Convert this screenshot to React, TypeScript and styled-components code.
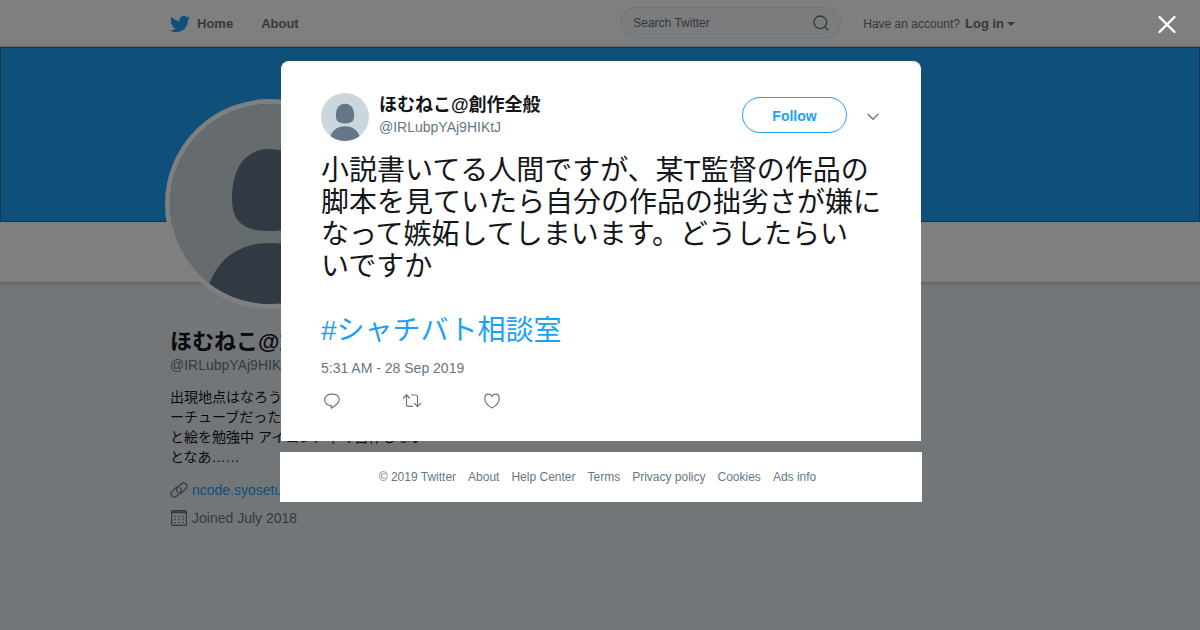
import React from "react";
import styled, { createGlobalStyle } from "styled-components";

const sans = `"Liberation Sans", "Noto Sans CJK JP", sans-serif`;

const GlobalStyle = createGlobalStyle`
  *, *::before, *::after { box-sizing: border-box; }
  html, body { margin: 0; min-height: 100%; }
  body { background: #e6ecf0; color: #14171a; font: 14px/20px ${sans}; overflow: hidden; }
  a { color: inherit; text-decoration: none; }
  h1, h2, p { margin: 0; }
  svg { display: block; flex: none; }
  button, input { font-family: inherit; }
`;

const Page = styled.div`
  min-height: 100vh;
`;

const TopBar = styled.header`
  height: 47px;
  background: #fff;
  border-bottom: 1px solid #c4c4c4;
`;

const Container = styled.div`
  max-width: 860px;
  margin: 0 auto;
`;

const TopBarInner = styled(Container)`
  display: flex;
  align-items: center;
  height: 46px;
  color: #66757f;
`;

const Nav = styled.nav`
  display: flex;
  align-items: center;
  flex: 1;
  gap: 28px;
  padding-top: 2px;
  font-size: 13px;
  font-weight: bold;
`;

const HomeLink = styled.a`
  display: flex;
  align-items: center;
  gap: 7px;
`;

const Search = styled.form`
  display: flex;
  align-items: center;
  width: 221px;
  height: 32px;
  padding: 0 11px 0 12px;
  border: 1px solid #e1e8ed;
  border-radius: 16px;
  background: #f5f8fa;
`;

const SearchInput = styled.input`
  flex: 1;
  min-width: 0;
  padding: 0;
  border: 0;
  background: none;
  font-size: 12px;
  color: #66757f;
  &::placeholder { color: #66757f; opacity: 1; }
`;

const IconButton = styled.button`
  display: grid;
  place-items: center;
  padding: 0;
  border: 0;
  background: none;
  color: inherit;
  cursor: pointer;
`;

const Account = styled.div`
  display: flex;
  align-items: center;
  gap: 5px;
  margin: 0 15px 0 22px;
  padding-top: 2px;
  font-size: 12px;
`;

const LogIn = styled.a`
  display: flex;
  align-items: center;
  gap: 3px;
  font-size: 13px;
  font-weight: bold;
`;

const Caret = styled.span`
  border: 4px solid transparent;
  border-top-color: currentColor;
  border-bottom: 0;
`;

const Banner = styled.div`
  height: 175px;
  background: #1da1f2;
  border: 1px solid #1474b0;
`;

const ProfileBar = styled.div`
  height: 60px;
  background: #fff;
  box-shadow: 0 1px 3px rgba(0, 0, 0, 0.25);
`;

const BigAvatar = styled.div`
  position: absolute;
  left: -5px;
  bottom: -27px;
  border: 5px solid #fff;
  border-radius: 50%;
`;

const AvatarAnchor = styled(Container)`
  position: relative;
  height: 100%;
`;

const Profile = styled(Container)`
  padding-top: 47px;
  color: #66757f;
`;

const ProfileName = styled.h1`
  font-size: 22px;
  line-height: 26px;
  color: #14171a;
`;

const Handle = styled.p`
  font-size: 14px;
  line-height: 20px;
  color: #657786;
`;

const Bio = styled.p`
  margin: 12px 0 9px;
  color: #14171a;
  white-space: pre-line;
`;

const Fact = styled.div`
  display: flex;
  align-items: center;
  gap: 4px;
  height: 28px;
  a { color: #1da1f2; }
`;

const Overlay = styled.div`
  position: fixed;
  inset: 0;
  display: flex;
  flex-direction: column;
  align-items: center;
  gap: 11px;
  padding: 61px 0 0 2px;
  background: rgba(0, 0, 0, 0.5);
`;

const Close = styled(IconButton)`
  position: absolute;
  top: 14px;
  right: 23px;
  width: 20px;
  height: 20px;
  color: #fff;
`;

const Card = styled.article`
  width: 640px;
  max-width: 100%;
  padding: 32px 40px 28px;
  border-radius: 8px 8px 0 0;
  background: #fff;
`;

const CardHeader = styled.header`
  display: flex;
  align-items: center;
  gap: 10px;
  height: 48px;
`;

const Author = styled.div`
  flex: 1;
  padding-bottom: 4px;
`;

const AuthorName = styled.h2`
  font-size: 18px;
  line-height: 24px;
`;

const Follow = styled.button`
  width: 105px;
  height: 36px;
  margin-bottom: 4px;
  padding: 2px 0 0;
  border: 1px solid #1da1f2;
  border-radius: 18px;
  background: #fff;
  color: #1da1f2;
  font-size: 14px;
  font-weight: bold;
`;

const More = styled(IconButton)`
  width: 32px;
  height: 32px;
  margin-right: -8px;
  color: #657786;
`;

const TweetText = styled.p`
  margin-top: 14px;
  font-size: 28px;
  line-height: 32px;
  white-space: pre-line;
  a { color: #1da1f2; }
`;

const Time = styled.p`
  margin-top: 11px;
  color: #657786;
`;

const Actions = styled.div`
  display: flex;
  gap: 58px;
  margin-top: 11px;
  color: #657786;
  ${IconButton} { width: 22px; height: 24px; }
`;

const Footer = styled.footer`
  display: flex;
  justify-content: center;
  align-items: center;
  gap: 12px;
  width: 642px;
  max-width: 100%;
  height: 50px;
  padding-right: 7px;
  background: #fff;
  color: #657786;
  font-size: 12px;
`;

const Avatar = ({ size, id }: { size: number; id: string }) => (
  <svg width={size} height={size} viewBox="0 0 200 200" role="img" aria-label="Profile picture">
    <clipPath id={id}><circle cx="100" cy="100" r="100" /></clipPath>
    <g clipPath={`url(#${id})`}>
      <rect width="200" height="200" fill="#ccd6dd" />
      <path fill="#657786" d="M100 45C74 45 62 66 62 94C62 117 72 127 100 127S138 117 138 94C138 66 126 45 100 45Z" />
      <path fill="#657786" d="M34 200C40 162 62 139 100 139S160 162 166 200Z" />
    </g>
  </svg>
);

const Bird = () => (
  <svg width="20" height="20" viewBox="0 0 24 24" fill="#1da1f2" aria-hidden>
    <path d="M23.95 4.57a10 10 0 0 1-2.82.77 4.96 4.96 0 0 0 2.16-2.72c-.95.55-2 .95-3.13 1.18a4.92 4.92 0 0 0-8.38 4.48C7.69 8.1 4.07 6.13 1.64 3.16a4.82 4.82 0 0 0-.67 2.48c0 1.71.87 3.21 2.19 4.09a4.9 4.9 0 0 1-2.23-.61v.06a4.92 4.92 0 0 0 3.95 4.83 5 5 0 0 1-2.21.08 4.94 4.94 0 0 0 4.6 3.42A9.87 9.87 0 0 1 0 19.54a14 14 0 0 0 7.55 2.21c9.05 0 14-7.5 14-13.98 0-.21 0-.42-.02-.63a9.94 9.94 0 0 0 2.46-2.55z" />
  </svg>
);

const footerLinks = ["About", "Help Center", "Terms", "Privacy policy", "Cookies", "Ads info"];

const line = { fill: "none", stroke: "currentColor", strokeLinecap: "round", strokeLinejoin: "round" } as const;

export default function App() {
  return (
    <Page>
      <GlobalStyle />
      <TopBar>
        <TopBarInner>
          <Nav>
            <HomeLink href="#"><Bird />Home</HomeLink>
            <a href="#">About</a>
          </Nav>
          <Search>
            <SearchInput aria-label="Search Twitter" placeholder="Search Twitter" />
            <IconButton type="button" aria-label="Search">
              <svg width="16" height="16" viewBox="0 0 16 16" {...line} strokeWidth="1.3">
                <circle cx="7.3" cy="7.3" r="6.3" /><path d="M12 12l3 3" />
              </svg>
            </IconButton>
          </Search>
          <Account>
            Have an account?
            <LogIn href="#">Log in<Caret /></LogIn>
          </Account>
        </TopBarInner>
      </TopBar>
      <Banner />
      <ProfileBar>
        <AvatarAnchor><BigAvatar><Avatar size={200} id="big" /></BigAvatar></AvatarAnchor>
      </ProfileBar>
      <Profile>
        <ProfileName>ほむねこ@創作全般</ProfileName>
        <Handle>@IRLubpYAj9HIKtJ</Handle>
        <Bio>{"出現地点はなろう\nーチューブだった\nと絵を勉強中 アイコン、早く自作しない\nとなあ……"}</Bio>
        <Fact>
          <svg width="18" height="18" viewBox="0 0 18 18" {...line} strokeWidth="1.2">
            <path d="M7.6 11.200a3.300 3.300 0 0 1 .1-4.700l3.500-3.500a3.300 3.300 0 0 1 4.700 4.700l-3.500 3.500a3.300 3.300 0 0 1-2.400 1" />
            <path d="M10.400 6.800a3.300 3.300 0 0 1-.1 4.700l-3.500 3.500a3.300 3.300 0 0 1-4.700-4.700l3.500-3.500a3.300 3.300 0 0 1 2.400-1" />
          </svg>
          <a href="#">ncode.syosetu.com</a>
        </Fact>
        <Fact>
          <svg width="18" height="18" viewBox="0 0 18 18" {...line} strokeWidth="1.2">
            <rect x="1.6" y="1.6" width="14.8" height="14.8" rx="1" />
            <path d="M1.6 3.2h14.8" strokeWidth="2" />
            <path d="M5 7.500h9M5 10.500h9M5 13.500h9" strokeWidth="1.6" strokeDasharray="0.1 3.9" />
          </svg>
          Joined July 2018
        </Fact>
      </Profile>

      <Overlay role="dialog" aria-label="Tweet">
        <Close aria-label="Close">
          <svg width="20" height="20" viewBox="0 0 20 20" {...line} strokeWidth="2.4">
            <path d="M2.500 3l15 15M17.500 3l-15 15" />
          </svg>
        </Close>
        <Card>
          <CardHeader>
            <Avatar size={48} id="small" />
            <Author>
              <AuthorName>ほむねこ@創作全般</AuthorName>
              <Handle>@IRLubpYAj9HIKtJ</Handle>
            </Author>
            <Follow>Follow</Follow>
            <More aria-label="More">
              <svg width="12" height="8" viewBox="0 0 12 8" {...line} strokeWidth="1.3"><path d="M1 1.200l5 5 5-5" /></svg>
            </More>
          </CardHeader>
          <TweetText lang="ja">
            {"小説書いてる人間ですが、某T監督の作品の\n脚本を見ていたら自分の作品の拙劣さが嫌に\nなって嫉妬してしまいます。どうしたらい\nいですか\n\n"}
            <a href="#">#シャチバト相談室</a>
          </TweetText>
          <Time>5:31 AM - 28 Sep 2019</Time>
          <Actions>
            <IconButton aria-label="Reply">
              <svg width="18" height="18" viewBox="0 0 18 18" {...line} strokeWidth="1.2">
                <path d="M8.300 13.700C4.400 13.700 1.700 11.200 1.700 8S4.300 2.200 7.800 2.200h2.400c3.500 0 6 2.400 6 5.300 0 3.800-4 6.300-7.500 8.500-.3.200-.5 0-.5-.3z" />
              </svg>
            </IconButton>
            <IconButton aria-label="Retweet">
              <svg width="20" height="18" viewBox="0 0 20 18" {...line} strokeWidth="1.2">
                <path d="M1.500 6l3-3.300 3 3.300M4.500 3v9.700c0 1 .7 1.700 1.700 1.700h4.300M9.500 3h4.300c1 0 1.700.7 1.700 1.700v9.700M12.500 11.400l3 3.300 3-3.300" />
              </svg>
            </IconButton>
            <IconButton aria-label="Like">
              <svg width="18" height="18" viewBox="0 0 18 18" {...line} strokeWidth="1.2">
                <path d="M9 16C5.500 14 1.800 10.300 1.800 6.400 1.800 4 3.400 2.200 5.500 2.200 7.100 2.200 8.400 3.200 9 4.500 9.600 3.200 10.900 2.200 12.500 2.200c2.100 0 3.700 1.800 3.700 4.200C16.200 10.300 12.500 14 9 16z" />
              </svg>
            </IconButton>
          </Actions>
        </Card>
        <Footer>
          <span>© 2019 Twitter</span>
          {footerLinks.map((label) => <a href="#" key={label}>{label}</a>)}
        </Footer>
      </Overlay>
    </Page>
  );
}
